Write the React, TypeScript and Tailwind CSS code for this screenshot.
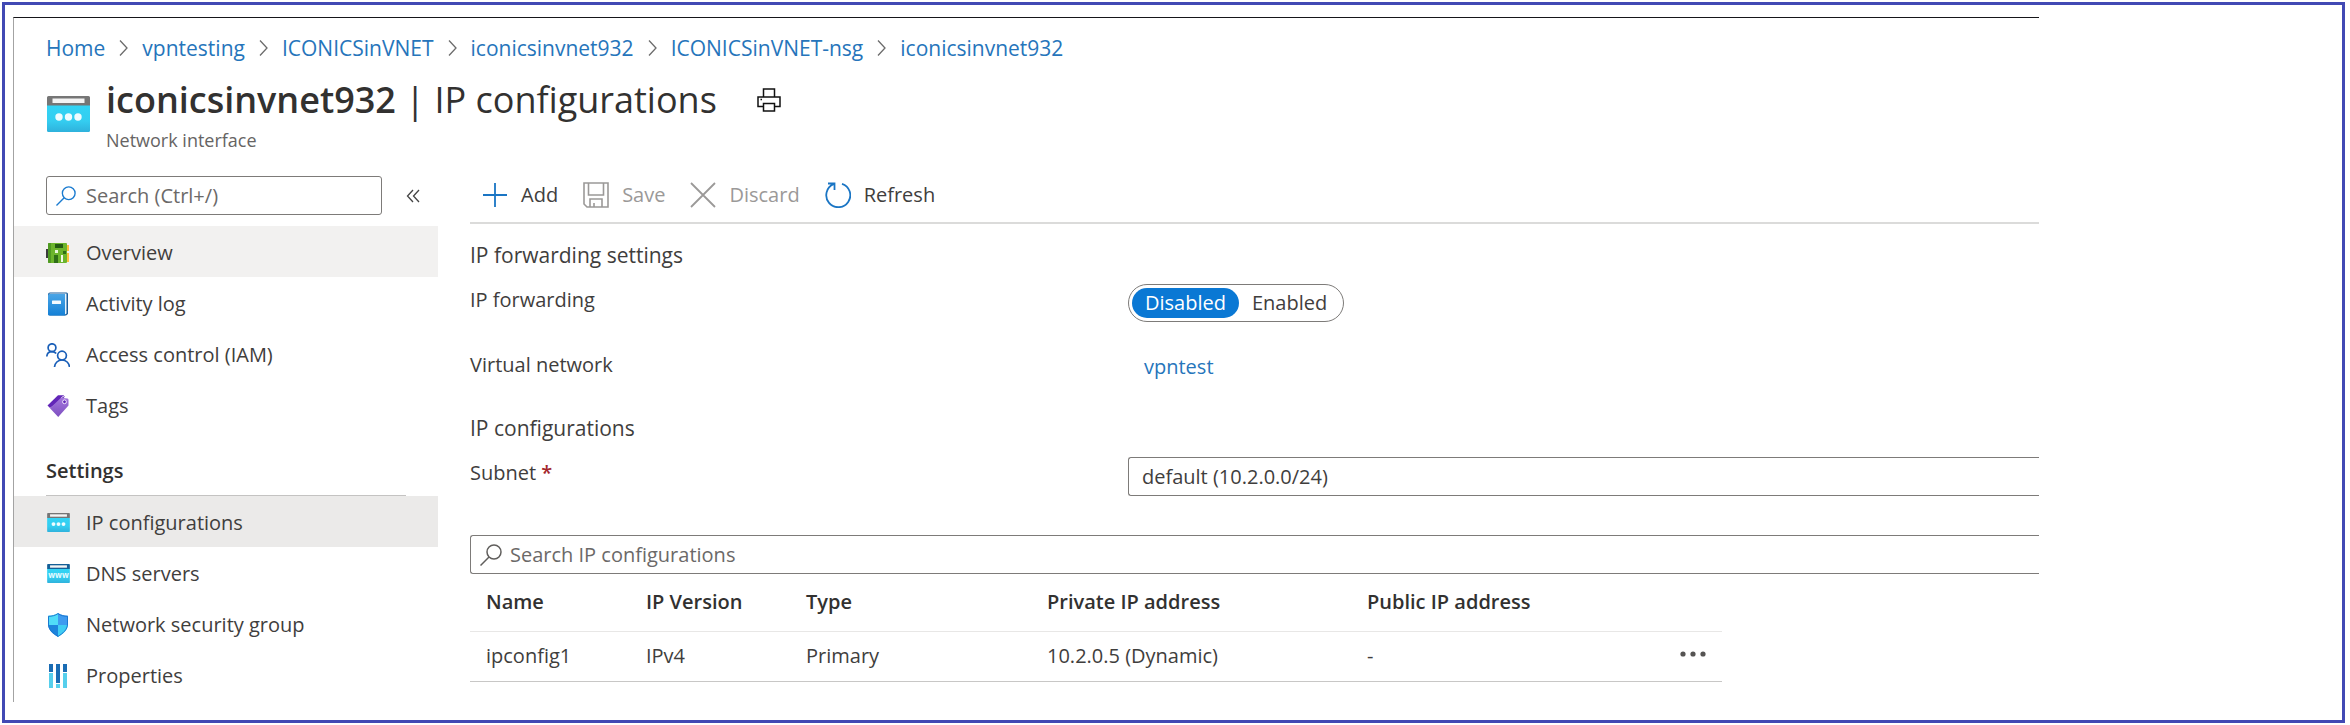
import { Fragment } from "react";
import type { ReactNode } from "react";

function BladeIcon({ className, www = false }: { className: string; www?: boolean }) {
  const id = www ? "blade-www" : "blade-dots";
  return (
    <svg viewBox="0 0 43 36" className={className} aria-hidden="true">
      <defs>
        <linearGradient id={id} x1="0" y1="0" x2="0" y2="1">
          <stop offset="0" stopColor="#32d4f5" />
          <stop offset="0.6" stopColor="#34cdf0" />
          <stop offset="1" stopColor="#2fb2dc" />
        </linearGradient>
      </defs>
      <path d="M0 9h43v25.5a1.500 1.500 0 0 1-1.500 1.500h-40A1.500 1.500 0 0 1 0 34.500z" fill={`url(#${id})`} />
      <path d="M0 9.500V1.500A1.500 1.500 0 0 1 1.500 0h40A1.500 1.500 0 0 1 43 1.500v8z" fill={www ? "#155f97" : "#767676"} />
      <rect x="5.500" y="2.500" width="32" height="4.500" fill="#f4f4f4" />
      {www ? (
        <text x="21.500" y="26" textAnchor="middle" fontSize="15" fontWeight="700" fontFamily="Open Sans, sans-serif" fill="#e8fbff">
          www
        </text>
      ) : (
        <g fill="#effcff">
          <circle cx="12" cy="21" r="3.700" />
          <circle cx="21.500" cy="21" r="3.700" />
          <circle cx="31" cy="21" r="3.700" />
        </g>
      )}
    </svg>
  );
}

function SearchIcon({ className }: { className: string }) {
  return (
    <svg viewBox="0 0 22 22" className={className} fill="none" stroke="currentColor" strokeWidth="1.500" aria-hidden="true">
      <circle cx="14" cy="8" r="7" />
      <path d="M9 13l-8.500 8.500" />
    </svg>
  );
}

function BoardIcon() {
  return (
    <svg viewBox="0 0 24 24" className="size-6" aria-hidden="true">
      <rect x="0" y="8" width="3" height="9" fill="#3c3c3c" />
      <rect x="20" y="4" width="3" height="6" fill="#fbc23c" />
      <rect x="20" y="12" width="3" height="9" fill="#fbc23c" />
      <rect x="2" y="2" width="19" height="20" rx="1" fill="#6cb52d" />
      <path d="M2 3a1 1 0 0 1 1-1h2v20H3a1 1 0 0 1-1-1z" fill="#4f9a22" />
      <rect x="9" y="3" width="8" height="4" fill="#245c12" />
      <rect x="8" y="14" width="4" height="8" fill="#2f6e17" />
      <rect x="9" y="9" width="3" height="3" fill="#e9f7dc" />
      <rect x="15" y="14" width="2" height="7" fill="#f3fbea" />
      <rect x="17" y="10" width="3" height="3" fill="#2f6e17" />
    </svg>
  );
}

function BookIcon() {
  return (
    <svg viewBox="0 0 24 24" className="size-6" aria-hidden="true">
      <defs>
        <linearGradient id="book" x1="0" y1="0" x2="0" y2="1">
          <stop offset="0" stopColor="#4aa5e6" />
          <stop offset="1" stopColor="#1480d6" />
        </linearGradient>
      </defs>
      <path d="M4 0.500h16.500a1.500 1.500 0 0 1 1.500 1.500v20l-2 1.500H4a2 2 0 0 1-2-2v-19a2 2 0 0 1 2-2z" fill="#1c5f9c" />
      <path d="M3.500 1.500h17v20l-1.500 1h-15z" fill="#eaf5fd" />
      <path d="M2 3.500a1.500 1.500 0 0 1 1.500-1.500H19v21.500H3.500A1.500 1.500 0 0 1 2 22z" fill="url(#book)" />
      <rect x="6" y="8.500" width="9" height="3.500" rx="0.500" fill="#f5fbff" />
    </svg>
  );
}

function PeopleIcon() {
  return (
    <svg viewBox="0 0 24 24" className="size-6" fill="none" stroke="#1a5fb8" strokeWidth="1.700" aria-hidden="true">
      <circle cx="6" cy="4.700" r="3.900" />
      <path d="M0.800 13.500C1 10.500 3 8.600 6 8.600c1.800 0 3.200.6 4.200 1.900" />
      <circle cx="16" cy="12.600" r="4.400" />
      <path d="M8.500 24c.3-4 3.400-7 7.500-7s7.200 3 7.500 7" />
    </svg>
  );
}

function TagIcon() {
  return (
    <svg viewBox="0 0 24 24" className="size-6" aria-hidden="true">
      <defs>
        <linearGradient id="tag" x1="0" y1="0" x2="0" y2="1">
          <stop offset="0" stopColor="#a375dc" />
          <stop offset="1" stopColor="#7d4fc0" />
        </linearGradient>
      </defs>
      <path d="M1.500 11.500L12 1.200h5.500L19 3 4 14z" fill="#6226b8" />
      <path d="M4 14.200L15 3.800l6.500.7a1.500 1.500 0 0 1 1 1.500v5.500L12.200 23z" fill="url(#tag)" />
      <circle cx="18.500" cy="7.800" r="1.900" fill="#6226b8" stroke="#f1e9fb" strokeWidth="1" />
      <path d="M15.500 3.800c.5-1.500 3-1.800 3.300.2" fill="none" stroke="#f1e9fb" strokeWidth="1" />
    </svg>
  );
}

function ShieldIcon() {
  return (
    <svg viewBox="0 0 24 24" className="size-6" aria-hidden="true">
      <clipPath id="shield">
        <path d="M12 0c3 2 6 2.700 10 2.800V11c0 6-5 10-10 13C7 21 2 17 2 11V2.800C6 2.700 9 2 12 0z" />
      </clipPath>
      <g clipPath="url(#shield)">
        <rect width="12" height="12" fill="#50dcf8" />
        <rect x="12" width="12" height="12" fill="#3f9bf0" />
        <rect y="12" width="12" height="12" fill="#1d84dc" />
        <rect x="12" y="12" width="12" height="12" fill="#40cdf3" />
      </g>
      <path d="M12 .6c3 2 6 2.700 9.500 2.700V11c0 5.700-4.700 9.500-9.500 12.400C7.200 20.500 2.500 16.700 2.500 11V3.300C6 3.300 9 2.600 12 .6z" fill="none" stroke="#1b78d0" />
    </svg>
  );
}

function PropertiesIcon() {
  return (
    <svg viewBox="0 0 24 24" className="size-6" aria-hidden="true">
      <g fill="#56cfec">
        <rect x="3" y="9" width="4" height="15" />
        <rect x="10" y="20" width="4" height="4" />
        <rect x="17" y="9" width="4" height="15" />
      </g>
      <g fill="#1a6cb4">
        <rect x="3" y="0" width="4" height="8" />
        <rect x="10" y="0" width="4" height="19" />
        <rect x="17" y="0" width="4" height="8" />
      </g>
    </svg>
  );
}

const crumbs = ["Home", "vpntesting", "ICONICSinVNET", "iconicsinvnet932", "ICONICSinVNET-nsg", "iconicsinvnet932"];

function NavItem({ icon, label, tone = "" }: { icon: ReactNode; label: string; tone?: string }) {
  return (
    <li>
      <a href="#" className={`flex h-[51px] items-center gap-4 pt-0.5 pl-8 ${tone}`}>
        <span className="flex w-6 justify-center">{icon}</span>
        {label}
      </a>
    </li>
  );
}

function ToolButton({ icon, label, disabled = false }: { icon: ReactNode; label: string; disabled?: boolean }) {
  return (
    <button type="button" disabled={disabled} className="flex items-center gap-[13px] disabled:text-[#9b9998]">
      {icon}
      {label}
    </button>
  );
}

export default function App() {
  return (
    <div className="bg-white pt-0.5 pr-[5px] pb-0.5 pl-0.5 font-['Open_Sans','Noto_Sans',sans-serif] text-[20px] leading-7 text-[#3f3e3d]">
      <div className="border-[3px] border-[#4149b4] pt-3 pb-[18px] pl-2">
        <div className="mr-[303px] border-t border-l border-t-[#16161a] border-l-[#a3a3a3] pb-0.5">
          <nav aria-label="Breadcrumb" className="flex items-center gap-3.5 pt-4 pl-8 text-[21px] text-[#2675bb]">
            {crumbs.map((crumb, i) => (
              <Fragment key={i}>
                {i > 0 && (
                  <svg viewBox="0 0 9 16" className="h-4 w-[9px]" fill="none" stroke="#6b6b6b" strokeWidth="1.300" aria-hidden="true">
                    <path d="M1 .5L8 8l-7 7.500" />
                  </svg>
                )}
                <a href="#">{crumb}</a>
              </Fragment>
            ))}
          </nav>

          <header className="flex gap-4 pt-4 pl-[33px]">
            <BladeIcon className="mt-[18px] h-9 w-[43px]" />
            <div>
              <div className="flex items-center gap-10">
                <h1 className="text-[36px] leading-[44px] text-[#323130]">
                  <span className="font-semibold">iconicsinvnet932</span> | IP configurations
                </h1>
                <button type="button" aria-label="Print">
                  <svg viewBox="0 0 24 24" className="size-6" fill="none" stroke="#111" strokeWidth="1.500" aria-hidden="true">
                    <path d="M6.500 9V1h11v8M6.500 18.500H1V9h22v9.500h-5.500M6.500 15.500h11V23h-11z" />
                    <path d="M3.500 11.500h1.500" />
                  </svg>
                </button>
              </div>
              <p className="mt-1.5 text-[18px] leading-6 text-[#666463]">Network interface</p>
            </div>
          </header>

          <div className="flex pt-6">
            <aside className="w-[424px] shrink-0">
              <div className="flex items-center gap-6 pl-8">
                <label className="flex h-[39px] w-[336px] items-center gap-2.5 rounded-[3px] border border-[#7d7b79] pl-[9px]">
                  <SearchIcon className="size-5 shrink-0 text-[#1a7bd0]" />
                  <input
                    type="text"
                    aria-label="Search menu"
                    placeholder="Search (Ctrl+/)"
                    className="min-w-0 flex-1 outline-none placeholder:text-[#6b6968]"
                  />
                </label>
                <button type="button" aria-label="Collapse menu">
                  <svg viewBox="0 0 14 14" className="size-3.5" fill="none" stroke="#444" strokeWidth="1.300" aria-hidden="true">
                    <path d="M7 1L1.500 7 7 13M13 1L7.500 7l5.500 6" />
                  </svg>
                </button>
              </div>
              <ul className="mt-[11px]">
                <NavItem icon={<BoardIcon />} label="Overview" tone="bg-[#f2f1f0]" />
                <NavItem icon={<BookIcon />} label="Activity log" />
                <NavItem icon={<PeopleIcon />} label="Access control (IAM)" />
                <NavItem icon={<TagIcon />} label="Tags" />
              </ul>
              <h2 className="mr-8 ml-8 border-b border-[#c4c3c2] pt-[27px] pb-2.5 font-semibold text-[#323130]">Settings</h2>
              <ul>
                <NavItem icon={<BladeIcon className="h-[19px] w-[23px]" />} label="IP configurations" tone="bg-[#ebeae9]" />
                <NavItem icon={<BladeIcon www className="h-[19px] w-[23px]" />} label="DNS servers" />
                <NavItem icon={<ShieldIcon />} label="Network security group" />
                <NavItem icon={<PropertiesIcon />} label="Properties" />
              </ul>
            </aside>

            <main className="ml-8 min-w-0 flex-1">
              <div className="flex h-12 items-start gap-[25px] border-b-2 border-[#dbdbda] pt-[5px] pl-3">
                <ToolButton
                  label="Add"
                  icon={
                    <svg viewBox="0 0 26 26" className="size-[26px]" fill="none" stroke="#1a75c4" strokeWidth="1.800" aria-hidden="true">
                      <path d="M13 1v24M1 13h24" />
                    </svg>
                  }
                />
                <ToolButton
                  disabled
                  label="Save"
                  icon={
                    <svg viewBox="0 0 26 26" className="size-[26px]" fill="none" stroke="currentColor" strokeWidth="1.600" aria-hidden="true">
                      <path d="M1 1h24v24H4l-3-3zM5.500 1v12h15V1M7 25v-8h12v8M11 25v-4" />
                    </svg>
                  }
                />
                <ToolButton
                  disabled
                  label="Discard"
                  icon={
                    <svg viewBox="0 0 26 26" className="size-[26px]" fill="none" stroke="currentColor" strokeWidth="1.800" aria-hidden="true">
                      <path d="M1 1l24 24M25 1L1 25" />
                    </svg>
                  }
                />
                <ToolButton
                  label="Refresh"
                  icon={
                    <svg viewBox="0 0 26 26" className="size-[26px]" fill="none" stroke="#1a75c4" strokeWidth="1.800" aria-hidden="true">
                      <path d="M17 1.800A12 12 0 1 1 8.500 2.200M3 1.500h6.500v6.500" />
                    </svg>
                  }
                />
              </div>

              <h2 className="mt-[17px] text-[21px]">IP forwarding settings</h2>
              <div className="mt-[15px] flex items-start">
                <span id="forwarding" className="w-[658px] pt-0.5">IP forwarding</span>
                <div role="group" aria-labelledby="forwarding" className="flex rounded-full border border-[#7d7b79] p-[3px]">
                  <button type="button" aria-pressed="true" className="h-[30px] rounded-full bg-[#0a78d4] px-[13px] text-white">
                    Disabled
                  </button>
                  <button type="button" aria-pressed="false" className="px-[13px]">
                    Enabled
                  </button>
                </div>
              </div>
              <div className="mt-[29px] flex">
                <span className="w-[674px]">Virtual network</span>
                <a href="#" className="pt-0.5 text-[#2675bb]">vpntest</a>
              </div>
              <h2 className="mt-[33px] text-[21px]">IP configurations</h2>
              <div className="mt-[15px] flex">
                <label htmlFor="subnet" className="w-[658px] pt-0.5">
                  Subnet <span className="font-semibold text-[#a4262c]">*</span>
                </label>
                <select id="subnet" className="h-[39px] flex-1 appearance-none rounded-l-[3px] border border-r-0 border-[#7d7b79] pl-[13px]">
                  <option>default (10.2.0.0/24)</option>
                </select>
              </div>
              <label className="mt-[39px] flex h-[39px] items-center gap-2 rounded-l-[3px] border border-r-0 border-[#7d7b79] pl-[9px]">
                <SearchIcon className="size-[22px] shrink-0 text-[#605e5c]" />
                <input
                  type="text"
                  aria-label="Search IP configurations"
                  placeholder="Search IP configurations"
                  className="min-w-0 flex-1 outline-none placeholder:text-[#6b6968]"
                />
              </label>
              <table className="w-[1252px] table-fixed text-left">
                <thead>
                  <tr className="h-[57px] border-b border-[#e8e7e6] text-[#323130]">
                    <th className="w-44 pl-4 font-semibold">Name</th>
                    <th className="w-40 font-semibold">IP Version</th>
                    <th className="w-[241px] font-semibold">Type</th>
                    <th className="w-80 font-semibold">Private IP address</th>
                    <th className="font-semibold">Public IP address</th>
                    <td className="w-[60px]"></td>
                  </tr>
                </thead>
                <tbody>
                  <tr className="h-[50px] border-b border-[#c8c7c6]">
                    <td className="pl-4">ipconfig1</td>
                    <td>IPv4</td>
                    <td>Primary</td>
                    <td>10.2.0.5 (Dynamic)</td>
                    <td>-</td>
                    <td className="pb-1">
                      <button type="button" aria-label="More actions" className="ml-[18px] block">
                        <svg viewBox="0 0 26 6" className="h-1.5 w-[26px]" fill="#555352" aria-hidden="true">
                          <circle cx="3" cy="3" r="2.600" />
                          <circle cx="13" cy="3" r="2.600" />
                          <circle cx="23" cy="3" r="2.600" />
                        </svg>
                      </button>
                    </td>
                  </tr>
                </tbody>
              </table>
            </main>
          </div>
        </div>
      </div>
    </div>
  );
}
